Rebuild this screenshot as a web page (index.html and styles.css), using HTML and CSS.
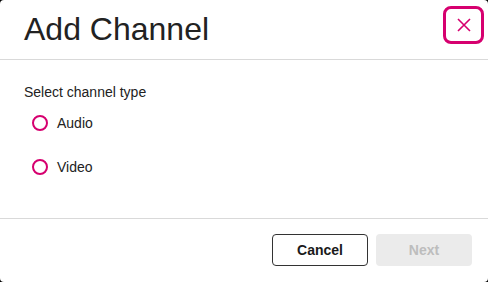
FILE: index.html
```html
<!DOCTYPE html>
<html>
<head>
<meta charset="utf-8">
<link rel="stylesheet" href="styles.css">
</head>
<body>
<div class="dialog">
  <div class="header">
    <h1 class="title">Add Channel</h1>
    <button class="close" aria-label="Close">
      <svg width="14" height="14" viewBox="0 0 14 14"><path d="M1 1L13 13M13 1L1 13" stroke="#d6006f" stroke-width="1.6" fill="none"/></svg>
    </button>
  </div>
  <div class="body">
    <div class="label">Select channel type</div>
    <div class="options">
      <label class="option"><span class="radio"></span><span>Audio</span></label>
      <label class="option"><span class="radio"></span><span>Video</span></label>
    </div>
  </div>
  <div class="footer">
    <button class="btn cancel">Cancel</button>
    <button class="btn next">Next</button>
  </div>
</div>
</body>
</html>
```
FILE: styles.css
```css
html, body { margin: 0; padding: 0; }
body {
  background: #000;
  font-family: "Liberation Sans", Arial, sans-serif;
  color: #222;
}
.dialog {
  width: 488px;
  height: 282px;
  background: #fff;
  border-radius: 4px;
  display: flex;
  flex-direction: column;
  overflow: hidden;
}
.header {
  height: 59px;
  border-bottom: 1px solid #d9d9d9;
  display: flex;
  justify-content: space-between;
  align-items: flex-start;
  padding: 0 4px 0 24px;
}
.title {
  margin: 11px 0 0;
  font-size: 32px;
  line-height: 37px;
  font-weight: normal;
  color: #222;
}
.close {
  margin-top: 6px;
  width: 41px;
  height: 38px;
  border: 3px solid #d6006f;
  border-radius: 8px;
  background: #fff;
  display: flex;
  align-items: center;
  justify-content: center;
  padding: 0;
}
.body {
  flex: 1;
  padding: 24px 24px 0;
}
.label {
  font-size: 14px;
  line-height: 16px;
}
.options {
  margin-top: 1px;
  display: flex;
  flex-direction: column;
}
.option {
  height: 44px;
  display: flex;
  align-items: center;
  padding-left: 8px;
  font-size: 14px;
}
.radio {
  width: 12px;
  height: 12px;
  border: 2px solid #d6006f;
  border-radius: 50%;
  margin-right: 9px;
}
.footer {
  border-top: 1px solid #d9d9d9;
  padding: 15px 16px 16px;
  display: flex;
  justify-content: flex-end;
  gap: 8px;
}
.btn {
  width: 96px;
  height: 32px;
  border-radius: 4px;
  font-family: "Liberation Sans", Arial, sans-serif;
  font-size: 14px;
  font-weight: bold;
  padding: 0;
}
.cancel {
  background: #fff;
  border: 1px solid #333;
  color: #1a1a1a;
}
.next {
  background: #ebebeb;
  border: none;
  color: #bdbdbd;
}
```
